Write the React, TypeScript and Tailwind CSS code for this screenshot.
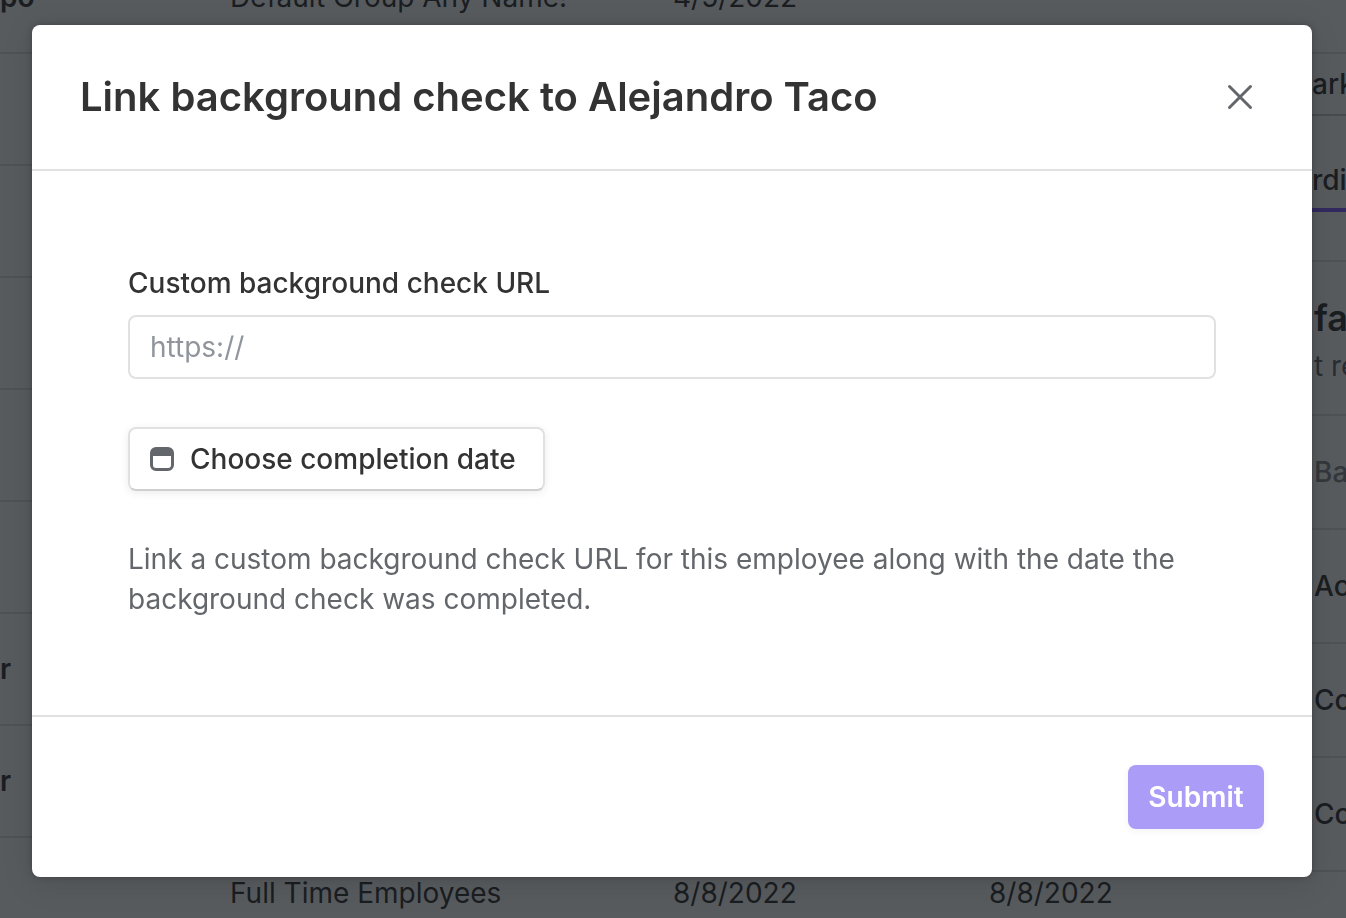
import { useState } from "react";

const employees = [
  { name: "po", group: "Default Group Any Name!", start: "4/5/2022", end: "" },
  { name: "", group: "", start: "", end: "" },
  { name: "", group: "", start: "", end: "" },
  { name: "", group: "", start: "", end: "" },
  { name: "", group: "", start: "", end: "" },
  { name: "", group: "", start: "", end: "" },
  { name: "r", group: "", start: "", end: "" },
  { name: "r", group: "", start: "", end: "" },
  { name: "", group: "Full Time Employees", start: "8/8/2022", end: "8/8/2022" },
];

const tasks = ["Ac", "Co", "Co"];

function EmployeeTable() {
  return (
    <div className="min-w-0 flex-1 overflow-hidden">
      <table className="-mt-[58px] w-full table-fixed border-separate border-spacing-0 text-left">
        <colgroup>
          <col className="w-[230px]" />
          <col className="w-[443px]" />
          <col className="w-[316px]" />
          <col />
        </colgroup>
        <tbody>
          {employees.map((row, i) => (
            <tr key={i}>
              <th scope="row" className="h-28 border-b-2 border-[#e1e1e1] p-0 font-semibold">{row.name}</th>
              <td className="h-28 border-b-2 border-[#e1e1e1] p-0">{row.group}</td>
              <td className="h-28 border-b-2 border-[#e1e1e1] p-0">{row.start}</td>
              <td className="h-28 border-b-2 border-[#e1e1e1] p-0">{row.end}</td>
            </tr>
          ))}
        </tbody>
      </table>
    </div>
  );
}

function SidePanel() {
  return (
    <aside className="w-[34px] shrink-0 overflow-hidden whitespace-nowrap">
      <div className="mt-[52px] h-16 border-y-2 border-[#e1e1e1] border-b-[#c8c8c8] leading-[60px] font-medium">ark</div>
      <div className="mt-8 h-16 border-b-4 border-[#7c5cff] leading-[64px] font-medium">rdi</div>
      <div className="h-[50px] border-b-2 border-[#e1e1e1]" />
      <div className="h-[154px] border-b-2 border-[#e1e1e1] pt-8 pl-0.5">
        <h2 className="text-4xl leading-[48px] font-semibold">fa</h2>
        <p className="leading-[48px] text-[#63676b]">t re</p>
      </div>
      <div className="h-[114px] border-b-2 border-[#e1e1e1] pl-0.5 leading-[112px] font-medium text-[#85898d]">Ba</div>
      {tasks.map((task, i) => (
        <div key={i} className="h-[114px] border-b-2 border-[#e1e1e1] pl-0.5 leading-[112px] font-medium">
          {task}
        </div>
      ))}
    </aside>
  );
}

function CloseIcon() {
  return (
    <svg width="32" height="32" viewBox="0 0 32 32" fill="none" stroke="#63676b" strokeWidth="3" strokeLinecap="round" aria-hidden="true">
      <path d="M5.5 5.5l21 21M26.5 5.5l-21 21" />
    </svg>
  );
}

function CalendarIcon() {
  return (
    <svg width="24" height="24" viewBox="0 0 24 24" fill="none" aria-hidden="true">
      <rect x="1.5" y="1.5" width="21" height="21" rx="4.5" stroke="#63676b" strokeWidth="3" />
      <path d="M1 9V6a5 5 0 0 1 5-5h12a5 5 0 0 1 5 5v3z" fill="#63676b" />
    </svg>
  );
}

export default function App() {
  const [url, setUrl] = useState("");

  return (
    <div className="h-screen overflow-hidden bg-white font-['Inter',sans-serif] text-[28px] leading-10 text-[#333333]">
      <div className="flex h-full overflow-hidden">
        <EmployeeTable />
        <SidePanel />
      </div>

      <div className="fixed inset-0 bg-[#11151a]/70 pt-[25px] pr-[34px] pl-8">
        <div role="dialog" aria-modal="true" aria-labelledby="dialog-title" className="rounded-lg bg-white shadow-[0_6px_32px_rgba(0,0,0,0.12),0_0_6px_rgba(0,0,0,0.25)]">
          <header className="flex items-center justify-between border-b-2 border-[#e1e1e1] p-12">
            <h1 id="dialog-title" className="text-[40px] leading-[48px] font-semibold">
              Link background check to Alejandro Taco
            </h1>
            <button type="button" aria-label="Close" className="mr-2">
              <CloseIcon />
            </button>
          </header>

          <form id="link-form" className="px-24 pt-[92px] pb-24" onSubmit={(e) => e.preventDefault()}>
            <label htmlFor="check-url" className="block font-medium">Custom background check URL</label>
            <input
              id="check-url"
              type="text"
              value={url}
              onChange={(e) => setUrl(e.target.value)}
              placeholder="https://"
              className="mt-3 block h-16 w-full rounded-lg border-2 border-[#e1e1e1] px-5 outline-none placeholder:text-[#90959c]"
            />
            <button
              type="button"
              className="mt-12 flex h-16 min-w-[417px] items-center gap-4 rounded-lg border-2 border-[#e1e1e1] border-b-[#cfcfcf] px-5 font-medium shadow-[0_2px_8px_rgba(0,0,0,0.08)]"
            >
              <CalendarIcon />
              Choose completion date
            </button>
            <p className="mt-12 text-[#63676b]">
              Link a custom background check URL for this employee along with the date the background check was completed.
            </p>
          </form>

          <footer className="flex justify-end border-t-2 border-[#e1e1e1] p-12">
            <button type="submit" form="link-form" className="h-16 min-w-[136px] rounded-lg bg-[#ab9cf7] px-5 font-semibold text-white shadow-[0_2px_8px_rgba(0,0,0,0.05)]">
              Submit
            </button>
          </footer>
        </div>
      </div>
    </div>
  );
}
